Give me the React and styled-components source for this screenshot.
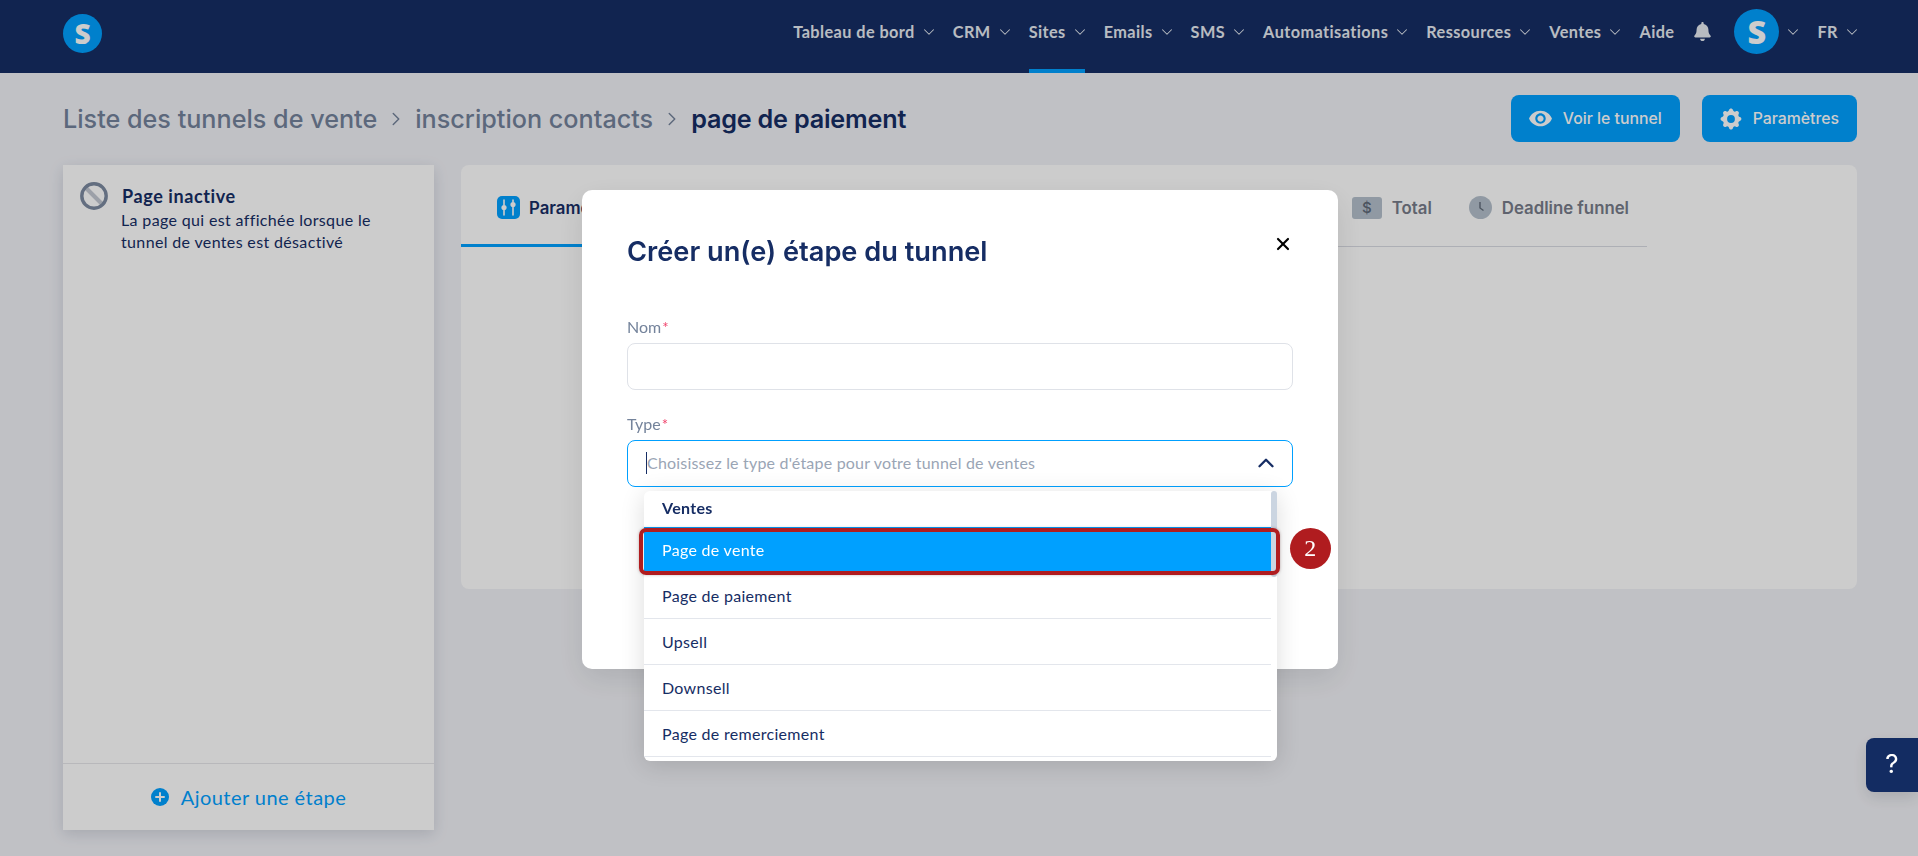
import React from "react";
import styled, { createGlobalStyle } from "styled-components";
import { ChevronDown, ChevronRight, ChevronUp, X } from "lucide-react";
import { FaBell } from "react-icons/fa";
import { MdVisibility } from "react-icons/md";
import { HiCog } from "react-icons/hi";

const Global = createGlobalStyle`
  html, body { margin: 0; padding: 0; height: 100%; overflow: hidden; background: #f1f2f7; }
  * { box-sizing: border-box; }
  body { font-family: "Lato", "Liberation Sans", sans-serif; color: #162d64; }
`;

const Page = styled.div`
  width: 1918px;
  height: 856px;
  display: flex;
  flex-direction: column;
  overflow: hidden;
`;

const Nav = styled.header`
  height: 73px;
  flex: none;
  background: #162d64;
  display: flex;
  align-items: stretch;
  justify-content: space-between;
  padding: 0 61px 0 63px;
`;

const Logo = styled.div`
  width: ${(p) => p.$size}px;
  height: ${(p) => p.$size}px;
  border-radius: 50%;
  background: #00a0ff;
  color: #fff;
  display: flex;
  align-items: center;
  justify-content: center;
  font-family: "Open Sans", sans-serif;
  font-weight: 800;
  font-size: ${(p) => p.$size * 0.72}px;
  line-height: 1;
  flex: none;
`;

const LogoSlot = styled.div`
  padding-top: 14px;
`;

const Menu = styled.nav`
  display: flex;
  align-items: stretch;
  gap: 19px;
`;

const MenuItem = styled.div`
  position: relative;
  display: flex;
  align-items: center;
  gap: 9px;
  padding-bottom: 10px;
  font-size: 16.3px;
  font-weight: 700;
  letter-spacing: 0.42px;
  color: #e6ebf2;
  white-space: nowrap;
  &::after {
    content: "";
    display: ${(p) => (p.$active ? "block" : "none")};
    position: absolute;
    left: 0;
    right: 0;
    bottom: 0;
    height: 4px;
    background: #00a0ff;
  }
`;

const BellItem = styled(MenuItem)`
  margin-right: 3px;
`;

const MenuChevron = styled(ChevronDown)`
  margin: 0 -4px;
`;

const Content = styled.main`
  flex: 1;
  padding: 22px 61px 26px 63px;
  display: flex;
  flex-direction: column;
  min-height: 0;
`;

const TopRow = styled.div`
  display: flex;
  justify-content: space-between;
  align-items: center;
  height: 47px;
  margin-bottom: 23px;
`;

const Crumbs = styled.div`
  display: flex;
  align-items: center;
  gap: 8px;
  font-family: "Inter", sans-serif;
  font-size: 25.2px;
  font-weight: 500;
  color: #74839b;
`;

const CrumbNow = styled.span`
  color: #162d64;
  font-weight: 600;
  letter-spacing: -0.2px;
`;

const Actions = styled.div`
  display: flex;
  gap: 22px;
`;

const ActionButton = styled.button`
  height: 47px;
  border: 0;
  border-radius: 8px;
  background: #00a0ff;
  color: #fff;
  display: flex;
  align-items: center;
  gap: 10px;
  padding: 0 18px 0 17px;
  font-family: "Inter", sans-serif;
  font-size: 15.8px;
  font-weight: 500;
`;

const GearIcon = styled(HiCog)`
  margin: 0 -1px;
`;

const Columns = styled.div`
  flex: 1;
  display: flex;
  gap: 27px;
  min-height: 0;
  align-items: flex-start;
`;

const Sidebar = styled.aside`
  width: 371px;
  height: 665px;
  background: #fff;
  display: flex;
  flex-direction: column;
  box-shadow: 0 4px 14px rgba(40, 50, 80, 0.16);
`;

const StepInfo = styled.div`
  flex: 1;
  display: flex;
  gap: 14px;
  padding: 17px 17px;
`;

const StepText = styled.div`
  padding-top: 3px;
`;

const StepTitle = styled.div`
  font-size: 18px;
  font-weight: 700;
  line-height: 22px;
  letter-spacing: 0.6px;
  margin-bottom: 2px;
`;

const StepDesc = styled.div`
  font-size: 16px;
  line-height: 22px;
  letter-spacing: 0.35px;
  width: 262px;
  margin-left: -1px;
`;

const AddStep = styled.div`
  height: 67px;
  border-top: 1px solid #e6e7ea;
  display: flex;
  align-items: center;
  justify-content: center;
  gap: 12px;
  padding-bottom: 1px;
  color: #00a0ff;
  font-size: 20px;
  letter-spacing: 0.45px;
`;

const MainPanel = styled.section`
  width: 1396px;
  height: 424px;
  background: #fff;
  border-radius: 8px;
`;

const Tabs = styled.div`
  width: 1186px;
  height: 82px;
  display: flex;
  align-items: center;
  gap: 37px;
  border-bottom: 1px solid #d9dbe3;
  position: relative;
  padding: 4px 18px 0 36px;
`;

const Tab = styled.div`
  display: flex;
  align-items: center;
  gap: 10px;
  font-family: "Inter", sans-serif;
  font-size: 16.8px;
  font-weight: 600;
  color: ${(p) => (p.$active ? "#162d64" : "#777c8a")};
`;

const TabFirst = styled(Tab)`
  margin-right: auto;
  gap: 9px;
  &::after {
    content: "";
    position: absolute;
    left: 0;
    bottom: -1px;
    width: 200px;
    height: 3px;
    background: #00a0ff;
  }
`;

const DollarIcon = styled.span`
  width: 30px;
  height: 22px;
  border-radius: 3px;
  background: #b5c0cc;
  color: #5f6a78;
  display: flex;
  align-items: center;
  justify-content: center;
  font-size: 15px;
  font-weight: 500;
`;

const Overlay = styled.div`
  position: fixed;
  inset: 0;
  z-index: 10;
  background: rgba(0, 0, 0, 0.2);
  display: flex;
  justify-content: center;
  padding: 190px 0 0 2px;
`;

const Modal = styled.div`
  width: 756px;
  height: 479px;
  background: #fff;
  border-radius: 10px;
  padding: 44px 45px 0;
  box-shadow: 0 10px 30px rgba(0, 0, 0, 0.1);
`;

const ModalHead = styled.div`
  display: flex;
  justify-content: space-between;
  align-items: flex-start;
  margin-bottom: 47px;
`;

const ModalTitle = styled.h2`
  margin: 0;
  font-family: "Inter", sans-serif;
  font-size: 27.2px;
  line-height: 36px;
  font-weight: 600;
  color: #162d64;
`;

const Close = styled.div`
  color: #000;
  display: flex;
  margin: 0;
`;

const Field = styled.div`
  margin-bottom: 24px;
`;

const Label = styled.div`
  height: 22px;
  margin-bottom: 4px;
  font-size: 16px;
  line-height: 20px;
  color: #74839b;
  & > b {
    color: #f0426b;
    font-weight: 400;
    font-size: 15px;
    margin-left: 1px;
  }
`;

const TextBox = styled.div`
  height: 47px;
  border: 1px solid #dfe2e8;
  border-radius: 8px;
  background: #fff;
`;

const SelectBox = styled.div`
  position: relative;
  height: 47px;
  border: 1px solid #00a0ff;
  border-radius: 8px;
  background: #fff;
  display: flex;
  align-items: center;
  justify-content: space-between;
  padding: 0 13px 2px 18px;
  color: #9aa5b5;
  font-size: 16px;
  letter-spacing: 0.2px;
`;

const Placeholder = styled.span`
  border-left: 1px solid #162d64;
  line-height: 22px;
`;

const Dropdown = styled.div`
  position: absolute;
  top: 50px;
  left: 16px;
  width: 633px;
  height: 270px;
  background: #fff;
  border-radius: 6px;
  display: flex;
  box-shadow: 0 4px 24px rgba(0, 0, 0, 0.14);
  color: #162d64;
`;

const OptionList = styled.div`
  flex: 1;
  position: relative;
`;

const GroupTitle = styled.div`
  height: 36px;
  padding: 0 18px 3px;
  display: flex;
  align-items: center;
  font-size: 16px;
  font-weight: 700;
  letter-spacing: 0.3px;
`;

const Option = styled.div`
  position: relative;
  z-index: ${(p) => (p.$selected ? 2 : 1)};
  height: 46px;
  padding: 0 18px;
  display: flex;
  align-items: center;
  font-size: 16px;
  letter-spacing: 0.3px;
  border-bottom: 1px solid ${(p) => (p.$selected ? "transparent" : "#e3e6ec")};
  background: ${(p) => (p.$selected ? "#00a0ff" : "#fff")};
  color: ${(p) => (p.$selected ? "#fff" : "#162d64")};
`;

const Highlight = styled.div`
  position: absolute;
  inset: 1px -9px -3px -5px;
  border: 4px solid #b01c1f;
  border-radius: 7px;
  box-shadow: 0 0 3px rgba(60, 0, 0, 0.3);
`;

const Badge = styled.div`
  position: absolute;
  right: -60px;
  top: 1px;
  width: 41px;
  height: 41px;
  border-radius: 50%;
  background: #b01c1f;
  color: #fff;
  display: flex;
  align-items: center;
  justify-content: center;
  font-family: "Liberation Serif", serif;
  font-size: 24px;
`;

const Track = styled.div`
  width: 6px;
  flex: none;
`;

const Thumb = styled.div`
  width: 6px;
  height: 86px;
  border-radius: 3px;
  background: #cbd5e1;
`;

const Help = styled.div`
  position: fixed;
  z-index: 20;
  right: 0;
  top: 738px;
  width: 52px;
  height: 54px;
  padding-bottom: 3px;
  border-radius: 8px 0 0 8px;
  background: #132c62;
  color: #fff;
  display: flex;
  align-items: center;
  justify-content: center;
  font-family: "Inter", sans-serif;
  font-size: 26px;
  box-shadow: 0 6px 16px rgba(0, 0, 0, 0.12);
`;

const BanIcon = () => (
  <svg width="28" height="28" viewBox="0 0 28 28" style={{ flex: "none" }}>
    <line x1="6" y1="6" x2="22" y2="22" stroke="#c3c9d3" strokeWidth="4" />
    <circle cx="14" cy="14" r="12.2" fill="none" stroke="#7c8aa0" strokeWidth="3.4" />
  </svg>
);

const PlusIcon = () => (
  <svg width="18" height="18" viewBox="0 0 18 18">
    <circle cx="9" cy="9" r="9" fill="#00a0ff" />
    <path d="M9 5v8M5 9h8" stroke="#fff" strokeWidth="2" strokeLinecap="round" />
  </svg>
);

const SlidersIcon = () => (
  <svg width="23" height="23" viewBox="0 0 23 23">
    <rect width="23" height="23" rx="5" fill="#00a0ff" />
    <path d="M7 4v5M7 14v5M16 4v2M16 11v8" stroke="#fff" strokeWidth="1.6" strokeLinecap="round" />
    <circle cx="7" cy="11.5" r="2.6" fill="#fff" />
    <circle cx="16" cy="8.5" r="2.6" fill="#fff" />
  </svg>
);

const ClockIcon = () => (
  <svg width="23" height="23" viewBox="0 0 23 23">
    <circle cx="11.5" cy="11.5" r="11.5" fill="#b5c0cc" />
    <path d="M11 6v6l3.5 2.5" fill="none" stroke="#5f6a78" strokeWidth="1.4" />
  </svg>
);

const menu = [
  ["Tableau de bord", true],
  ["CRM", true],
  ["Sites", true, true],
  ["Emails", true],
  ["SMS", true],
  ["Automatisations", true],
  ["Ressources", true],
  ["Ventes", true],
  ["Aide", false],
];

const Sep = () => <ChevronRight size={22} strokeWidth={1.6} color="#74839b" />;

export default function App() {
  return (
    <Page>
      <Global />
      <Nav>
        <LogoSlot>
          <Logo $size={39}>S</Logo>
        </LogoSlot>
        <Menu>
          {menu.map(([label, chev, active]) => (
            <MenuItem key={label} $active={active}>
              {label}
              {chev && <MenuChevron size={18} strokeWidth={1.4} />}
            </MenuItem>
          ))}
          <BellItem>
            <FaBell size={19} />
          </BellItem>
          <MenuItem>
            <Logo $size={45}>S</Logo>
            <MenuChevron size={18} strokeWidth={1.4} />
          </MenuItem>
          <MenuItem>
            FR
            <MenuChevron size={18} strokeWidth={1.4} />
          </MenuItem>
        </Menu>
      </Nav>
      <Content>
        <TopRow>
          <Crumbs>
            <span>Liste des tunnels de vente</span>
            <Sep />
            <span>inscription contacts</span>
            <Sep />
            <CrumbNow>page de paiement</CrumbNow>
          </Crumbs>
          <Actions>
            <ActionButton>
              <MdVisibility size={25} />
              Voir le tunnel
            </ActionButton>
            <ActionButton>
              <GearIcon size={26} />
              Paramètres
            </ActionButton>
          </Actions>
        </TopRow>
        <Columns>
          <Sidebar>
            <StepInfo>
              <BanIcon />
              <StepText>
                <StepTitle>Page inactive</StepTitle>
                <StepDesc>La page qui est affichée lorsque le tunnel de ventes est désactivé</StepDesc>
              </StepText>
            </StepInfo>
            <AddStep>
              <PlusIcon />
              Ajouter une étape
            </AddStep>
          </Sidebar>
          <MainPanel>
            <Tabs>
              <TabFirst $active>
                <SlidersIcon />
                Paramètres
              </TabFirst>
              <Tab>
                <DollarIcon>$</DollarIcon>
                Total
              </Tab>
              <Tab>
                <ClockIcon />
                Deadline funnel
              </Tab>
            </Tabs>
          </MainPanel>
        </Columns>
      </Content>
      <Overlay>
        <Modal>
          <ModalHead>
            <ModalTitle>Créer un(e) étape du tunnel</ModalTitle>
            <Close>
              <X size={20} strokeWidth={2.6} />
            </Close>
          </ModalHead>
          <Field>
            <Label>
              Nom<b>*</b>
            </Label>
            <TextBox />
          </Field>
          <Field>
            <Label>
              Type<b>*</b>
            </Label>
            <SelectBox>
              <Placeholder>Choisissez le type d'étape pour votre tunnel de ventes</Placeholder>
              <ChevronUp size={26} strokeWidth={2.2} color="#162d64" />
              <Dropdown>
                <OptionList>
                  <GroupTitle>Ventes</GroupTitle>
                  <Option $selected>
                    Page de vente
                    <Highlight />
                    <Badge>2</Badge>
                  </Option>
                  <Option>Page de paiement</Option>
                  <Option>Upsell</Option>
                  <Option>Downsell</Option>
                  <Option>Page de remerciement</Option>
                </OptionList>
                <Track>
                  <Thumb />
                </Track>
              </Dropdown>
            </SelectBox>
          </Field>
        </Modal>
      </Overlay>
      <Help>?</Help>
    </Page>
  );
}
